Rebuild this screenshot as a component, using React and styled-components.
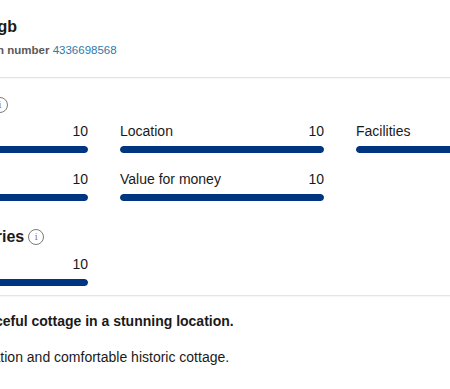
import React from 'react';
import styled, { createGlobalStyle } from 'styled-components';

const GlobalStyle = createGlobalStyle`
html, body {
    margin: 0;
    padding: 0;
    background: #ffffff;
    overflow: hidden;
}
body {
    font-family: "Liberation Sans", Arial, sans-serif;
    color: #1a1a1a;
}
`

const Viewport = styled.div`
width: 450px;
height: 389px;
overflow: hidden;
`

const Sheet = styled.div`
width: 700px;
margin-left: -116px;
`

const Header = styled.div`
padding: 17px 0 19px 53px;
`

const Title = styled.h2`
margin: 0;
padding-left: 33px;
font-size: 16px;
line-height: 20px;
font-weight: bold;
`

const Sub = styled.div`
margin-top: 5px;
font-size: 11.5px;
line-height: 16px;
font-weight: bold;
color: #595959;
`

const Link = styled.a`
font-weight: normal;
color: #2f78ad;
text-decoration: none;
`

const Divider = styled.div`
height: 1px;
background: #e4e4e4;
box-shadow: 0 1px 1px rgba(0, 0, 0, 0.04);
`

const Section = styled.div`
padding-top: ${p => p.$top}px;
`

const Heading = styled.div`
display: flex;
align-items: center;
gap: 4px;
padding-left: ${p => p.$indent}px;
font-size: 16px;
line-height: 20px;
font-weight: bold;
`

const InfoCircle = styled.span`
display: inline-flex;
align-items: center;
justify-content: center;
width: 14px;
height: 14px;
border: 1px solid #7a7a7a;
border-radius: 50%;
color: #7a7a7a;
font-family: "DejaVu Serif", serif;
font-size: 9px;
font-weight: normal;
line-height: 1;
`

const Grid = styled.div`
display: grid;
grid-template-columns: repeat(3, 204px);
column-gap: 32px;
row-gap: 17px;
margin-top: ${p => p.$top}px;
`

const Score = styled.div`
display: flex;
flex-direction: column;
`

const ScoreHead = styled.div`
display: flex;
justify-content: space-between;
font-size: 14px;
line-height: 18px;
`

const Track = styled.div`
margin-top: 6px;
height: 7px;
border-radius: 4px;
background: #ebebeb;
overflow: hidden;
`

const Fill = styled.div`
height: 100%;
border-radius: 4px;
background: #003580;
`

const Rule = styled.div`
padding-top: 9px;
`

const Review = styled.div`
padding: 15px 0 0 86px;
`

const ReviewTitle = styled.div`
font-size: 14px;
line-height: 20px;
font-weight: bold;
`

const ReviewText = styled.p`
margin: 16px 0 0;
font-size: 14px;
line-height: 20px;
`

const categories = [
    { label: 'Staff', score: 10 },
    { label: 'Location', score: 10 },
    { label: 'Facilities', score: 10 },
    { label: 'Cleanliness', score: 10 },
    { label: 'Value for money', score: 10 },
];

const extra = [
    { label: 'Free WiFi', score: 10 },
];

const ScoreBar = ({ label, score }) => (
    <Score>
        <ScoreHead>
            <span>{label}</span>
            <span>{score}</span>
        </ScoreHead>
        <Track>
            <Fill style={{ width: `${score * 10}%` }} />
        </Track>
    </Score>
);

const Info = () => <InfoCircle>i</InfoCircle>;

const App = () => {
    return (
        <Viewport>
            <GlobalStyle />
            <Sheet>
                <Header>
                    <Title>Ardgb</Title>
                    <Sub>Registration number <Link href="#">4336698568</Link></Sub>
                </Header>
                <Divider />
                <Section $top={17}>
                    <Heading $indent={16}>
                        <span>Categories:</span>
                        <Info />
                    </Heading>
                    <Grid $top={7}>
                        {categories.map(c => <ScoreBar key={c.label} {...c} />)}
                    </Grid>
                </Section>
                <Section $top={26}>
                    <Heading $indent={30}>
                        <span>Subcategories</span>
                        <Info />
                    </Heading>
                    <Grid $top={8}>
                        {extra.map(c => <ScoreBar key={c.label} {...c} />)}
                    </Grid>
                </Section>
                <Rule>
                    <Divider />
                </Rule>
                <Review>
                    <ReviewTitle>Peaceful cottage in a stunning location.</ReviewTitle>
                    <ReviewText>Location and comfortable historic cottage.</ReviewText>
                </Review>
            </Sheet>
        </Viewport>
    );
};

export default App;
